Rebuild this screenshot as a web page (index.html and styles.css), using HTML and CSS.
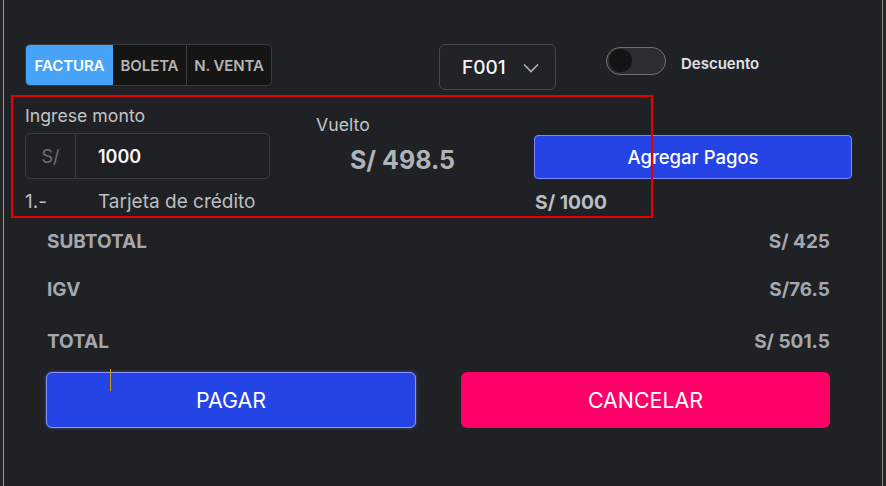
FILE: index.html
```html
<!DOCTYPE html>
<html lang="es">
<head>
<meta charset="utf-8">
<link rel="stylesheet" href="styles.css">
</head>
<body>
<div class="frame">
  <div class="top-row">
    <div class="tabs">
      <span class="tab active">FACTURA</span>
      <span class="tab">BOLETA</span>
      <span class="tab">N. VENTA</span>
    </div>
    <div class="select">
      <span class="select-value">F001</span>
      <svg class="chevron" width="16" height="10" viewBox="0 0 16 10"><path d="M1 1.5 L8 8.5 L15 1.5" fill="none" stroke="#a9b0bf" stroke-width="1.6"/></svg>
    </div>
    <div class="toggle-wrap">
      <span class="toggle"><span class="knob"></span></span>
      <span class="toggle-label">Descuento</span>
    </div>
  </div>

  <div class="pay-row">
    <div class="pay-input">
      <div class="field-label">Ingrese monto</div>
      <div class="input-group">
        <span class="prefix">S/</span>
        <span class="value">1000</span>
      </div>
    </div>
    <div class="vuelto">
      <div class="field-label vuelto-label">Vuelto</div>
      <div class="vuelto-amount">S/ 498.5</div>
    </div>
    <button class="btn-add">Agregar Pagos</button>
  </div>

  <div class="item-row">
    <span class="item-num">1.-</span>
    <span class="item-name">Tarjeta de crédito</span>
    <span class="item-amount">S/ 1000</span>
  </div>

  <div class="totals">
    <div class="total-line"><span>SUBTOTAL</span><span>S/ 425</span></div>
    <div class="total-line igv"><span>IGV</span><span>S/76.5</span></div>
    <div class="total-line grand"><span>TOTAL</span><span>S/ 501.5</span></div>
  </div>

  <div class="actions">
    <button class="btn-pay">PAGAR</button>
    <button class="btn-cancel">CANCELAR</button>
    <span class="caret"></span>
  </div>

  <div class="highlight"></div>
</div>
</body>
</html>
```

FILE: styles.css
```css
* { box-sizing: border-box; }
html, body { margin: 0; padding: 0; }
body {
  background: #262626;
  font-family: Inter, "Liberation Sans", sans-serif;
  width: 886px;
  height: 486px;
  overflow: hidden;
}
.frame {
  position: relative;
  margin-left: 3px;
  width: 880px;
  height: 486px;
  background: #202124;
  border-left: 1px solid #9c9c9c;
  border-right: 1px solid #8a8a8a;
  padding: 44px 0 0 21px;
}
.top-row {
  display: flex;
  align-items: flex-start;
  height: 46px;
}
.tabs {
  display: flex;
  width: 247px;
  height: 42px;
  border: 1px solid #3b3b3b;
  border-radius: 5px;
  background: #151515;
  overflow: hidden;
}
.tab {
  display: flex;
  align-items: center;
  justify-content: center;
  font-size: 15px;
  font-weight: 600;
  color: #b4b4b4;
  letter-spacing: -0.1px;
}
.tab.active { width: 87px; background: #46a3f7; color: #fff; }
.tab:nth-child(2) { width: 74px; border-right: 1px solid #3b3b3b; }
.tab:nth-child(3) { flex: 1; }
.select {
  margin-left: 167px;
  width: 117px;
  height: 46px;
  border: 1px solid #464748;
  border-radius: 6px;
  background: #222326;
  display: flex;
  align-items: center;
  padding-left: 22px;
}
.select-value { font-size: 19px; font-weight: 500; color: #f4f4f8; }
.chevron { margin-left: 17px; margin-top: 1px; }
.toggle-wrap {
  margin-left: 50px;
  margin-top: 3px;
  display: flex;
  align-items: center;
}
.toggle {
  position: relative;
  width: 60px;
  height: 28px;
  border-radius: 14px;
  background: #2c2d31;
  border: 1.5px solid #707070;
}
.knob {
  position: absolute;
  left: 2px;
  top: 1px;
  width: 23px;
  height: 23px;
  border-radius: 50%;
  background: #141414;
}
.toggle-label {
  margin-left: 15px;
  margin-top: 4px;
  font-size: 15px;
  font-weight: 600;
  color: #e0e2e8;
}
.pay-row {
  display: flex;
  margin-top: 16px;
  height: 73px;
}
.pay-input { width: 245px; }
.field-label {
  font-size: 17.7px;
  line-height: 20px;
  color: #c2c4c8;
}
.input-group {
  margin-top: 7px;
  height: 46px;
  display: flex;
  border: 1px solid #3a3b3d;
  border-radius: 5px;
  background: #1f2023;
}
.prefix {
  width: 50px;
  border-right: 1px solid #3a3b3d;
  display: flex;
  align-items: center;
  justify-content: center;
  font-size: 18px;
  color: #6e7074;
}
.value {
  display: flex;
  align-items: center;
  padding-left: 22px;
  font-size: 18px;
  font-weight: 600;
  color: #f6f6f8;
}
.vuelto { width: 218px; margin-left: 46px; }
.vuelto-label { margin-top: 9px; }
.vuelto-amount {
  margin-top: 11px;
  margin-left: 34px;
  font-size: 25px;
  line-height: 28px;
  font-weight: 700;
  color: #afb3ba;
}
.btn-add {
  margin-top: 29px;
  width: 318px;
  height: 44px;
  background: #2444e6;
  border: 1px solid #7b88ff;
  border-radius: 4px;
  color: #fff;
  font-family: inherit;
  font-size: 18.5px;
  font-weight: 500;
  padding: 0;
}
.item-row {
  display: flex;
  margin-top: 12px;
  font-size: 19px;
  line-height: 22px;
  color: #bcbec2;
}
.item-num { width: 73px; }
.item-name { width: 437px; }
.item-amount { font-weight: 700; font-size: 19.3px; color: #b9bdc3; }
.totals {
  margin-top: 18px;
  width: 805px;
  padding-left: 22px;
}
.total-line {
  display: flex;
  justify-content: space-between;
  font-size: 19px;
  line-height: 22px;
  font-weight: 700;
  color: #a4a8ae;
}
.total-line.igv { margin-top: 26px; }
.total-line.grand { margin-top: 30px; }
.actions {
  position: relative;
  display: flex;
  margin-top: 19px;
  padding-left: 21px;
  gap: 45px;
}
.btn-pay, .btn-cancel {
  height: 56px;
  border-radius: 6px;
  color: #fff;
  font-family: inherit;
  font-size: 21.4px;
  font-weight: 400;
  padding: 0;
}
.btn-pay {
  width: 370px;
  background: #2444e6;
  border: 1px solid #8c95ff;
  box-shadow: 0 0 3px rgba(140, 150, 255, 0.5);
}
.btn-cancel {
  width: 369px;
  background: #ff0069;
  border: none;
}
.caret {
  position: absolute;
  left: 85px;
  top: -3px;
  width: 1px;
  height: 22px;
  background: #c9a000;
}
.highlight {
  position: absolute;
  left: 7px;
  top: 95px;
  width: 642px;
  height: 123px;
  border: 2px solid #e60000;
}
```
